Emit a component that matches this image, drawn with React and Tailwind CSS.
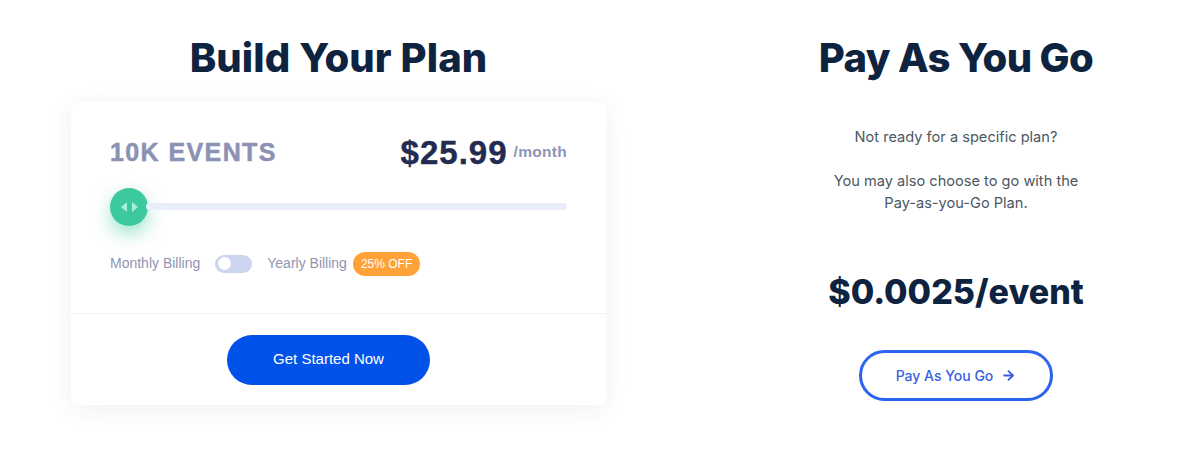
import { ArrowRight } from 'lucide-react';

const HEAD = "font-['Inter',sans-serif]";
const ARIAL = "font-['Liberation_Sans',Arial,sans-serif]";

function SliderThumb() {
  return (
    <div className="w-[38px] h-[38px] rounded-full bg-[#3cc99e] shadow-[0_8px_18px_rgba(60,201,158,0.5)] flex items-center justify-center gap-[5px] shrink-0">
      <svg width="6" height="10" viewBox="0 0 6 10">
        <path d="M6 0 L0 5 L6 10 Z" fill="#a6f0d6" />
      </svg>
      <svg width="6" height="10" viewBox="0 0 6 10">
        <path d="M0 0 L6 5 L0 10 Z" fill="#a6f0d6" />
      </svg>
    </div>
  );
}

export default function App() {
  return (
    <div className="w-[1200px] h-[454px] bg-white flex pl-[71px] pt-[34px]">
      {/* ── Build your plan ── */}
      <div className="w-[535px] flex flex-col items-center">
        <h2 className={`${HEAD} text-[40px] leading-[48px] font-extrabold text-[#0d2340] tracking-[0.1px]`}>
          Build Your Plan
        </h2>
        <div className="mt-[20px] w-full bg-white rounded-lg shadow-[0_4px_24px_rgba(30,40,80,0.07)]">
          <div className={`${ARIAL} px-[39px] pt-[32px] pb-[37px]`}>
            <div className="flex items-center justify-between">
              <span className="text-[25px] font-bold tracking-[1.4px] text-[#8c92b3] [-webkit-text-stroke:0.5px_#8c92b3]">
                10K EVENTS
              </span>
              <div className="flex items-center gap-[6px]">
                <span className="text-[33px] font-bold tracking-[1px] text-[#232b50] leading-none [-webkit-text-stroke:0.4px_#232b50]">
                  $25.99
                </span>
                <span className="text-[15.5px] font-bold tracking-[0.3px] text-[#8e94b5] -mt-[2px]">/month</span>
              </div>
            </div>
            <div className="mt-[16px] flex items-center">
              <SliderThumb />
              <div className="flex-1 h-[7px] rounded-full bg-[#eaeefa] -ml-[2px]" />
            </div>
            <div className="mt-[26px] flex items-center text-[14px] text-[#8f95b2]">
              <span>Monthly Billing</span>
              <div className="ml-[15px] w-[37px] h-[18px] rounded-full bg-[#ccd5ef] flex items-center px-[3px]">
                <div className="w-[13px] h-[13px] rounded-full bg-white" />
              </div>
              <span className="ml-[15px]">Yearly Billing</span>
              <span className="ml-[6px] px-[8px] h-[24px] flex items-center rounded-full bg-[#ffa237] text-white text-[12px]">
                25% OFF
              </span>
            </div>
          </div>
          <div className="border-t border-[#eff0f5] flex justify-center pt-[21px] pb-[20px] pr-[20px]">
            <button className={`${ARIAL} w-[203px] h-[50px] rounded-full bg-[#0052e9] text-white text-[15px]`}>
              Get Started Now
            </button>
          </div>
        </div>
      </div>

      {/* ── Pay as you go ── */}
      <div className="flex-1 ml-[106px] flex flex-col items-center text-center">
        <h2 className={`${HEAD} text-[40px] leading-[48px] font-extrabold text-[#0d2340] tracking-[-0.6px]`}>
          Pay As You Go
        </h2>
        <div className={`${HEAD} text-[14.6px] leading-[22px] text-[#4b5862]`}>
          <p className="mt-[44px]">Not ready for a specific plan?</p>
          <p className="mt-[22px]">You may also choose to go with the<br />Pay-as-you-Go Plan.</p>
        </div>
        <p className={`${HEAD} mt-[58px] text-[34px] leading-[40px] font-extrabold text-[#0d2340]`}>
          $0.0025/event
        </p>
        <button className={`${HEAD} mt-[38px] w-[194px] h-[51px] rounded-full border-[3px] border-[#2c63ef] text-[#3a5ee0] text-[14px] font-medium flex items-center justify-center gap-[8px]`}>
          Pay As You Go
          <ArrowRight size={15} strokeWidth={3} />
        </button>
      </div>
    </div>
  );
}
